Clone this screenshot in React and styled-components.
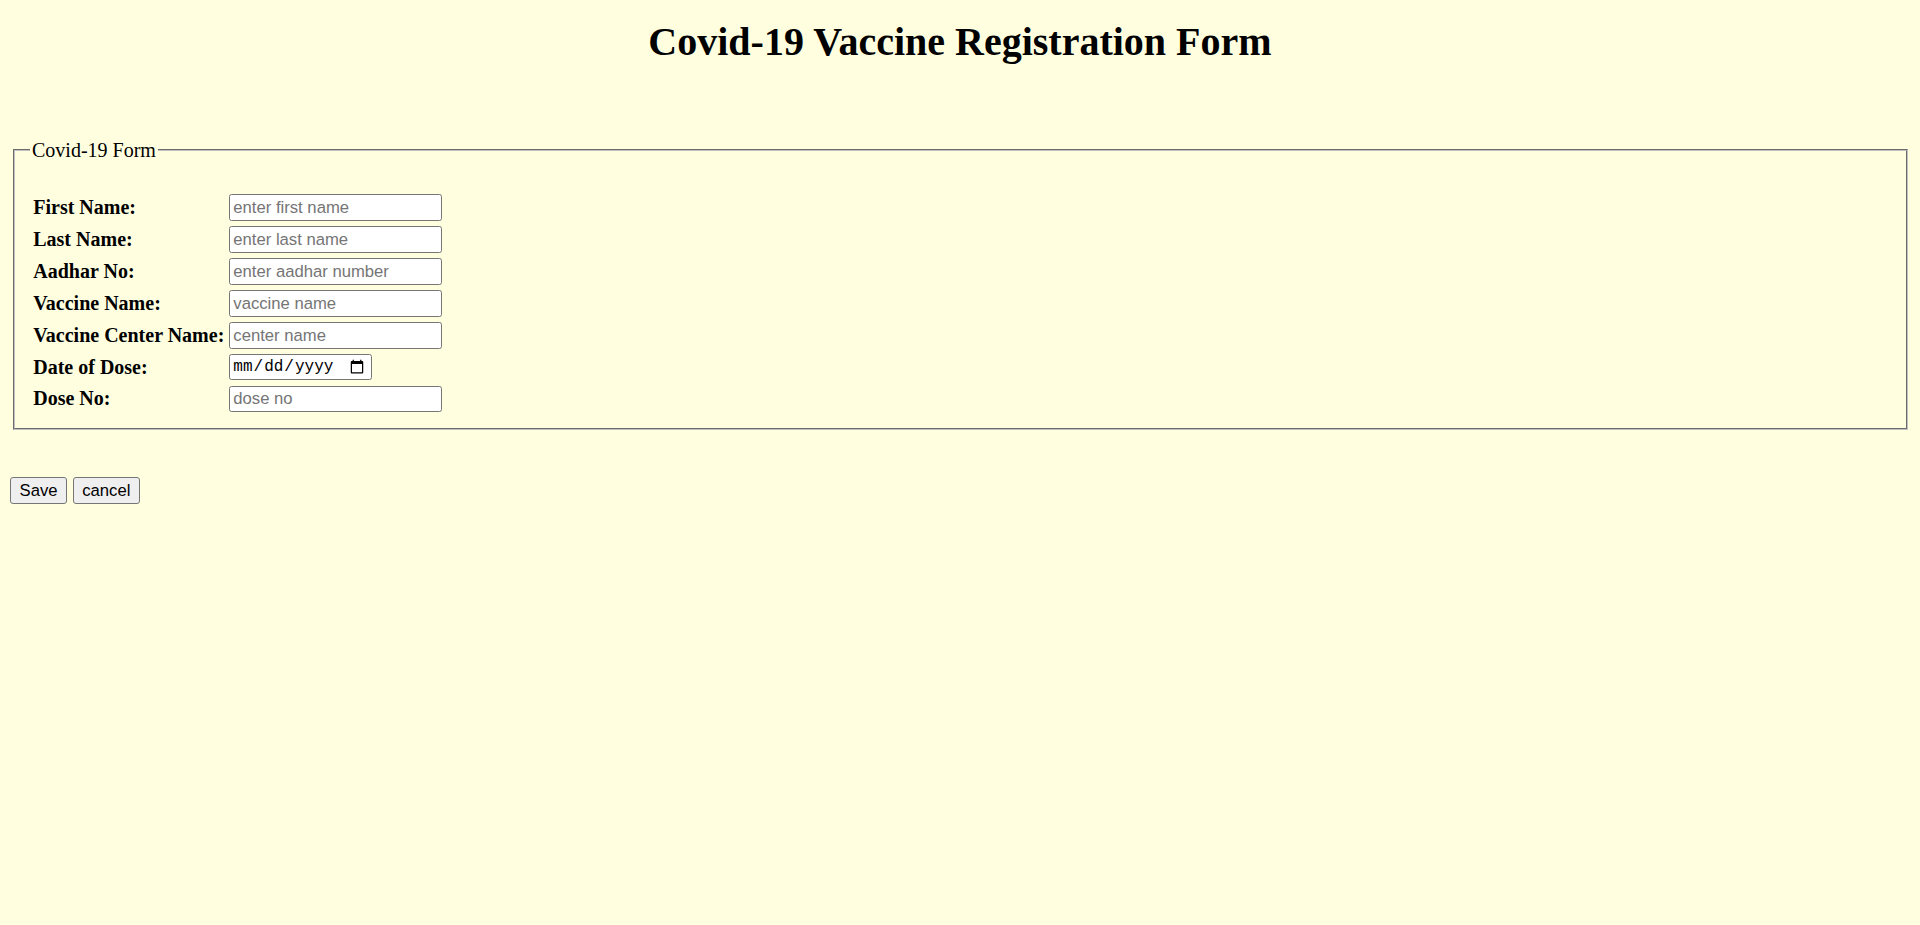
import React from 'react';
import styled, { createGlobalStyle } from 'styled-components';

const GlobalStyle = createGlobalStyle`
  html, body {
    margin: 0;
    padding: 0;
    background: #ffffe0;
  }
  body {
    font-family: "Liberation Serif", "Times New Roman", serif;
    font-size: 20px;
    color: #000;
  }
`;

const Page = styled.div`
  padding: 10px;
`;

const Title = styled.h1`
  margin: 8.5px 0 74px;
  font-size: 40px;
  font-weight: 700;
  line-height: 46px;
  text-align: center;
`;

const FieldSet = styled.fieldset`
  margin: 0 2.5px;
  padding: 7px 15px 16.25px;
  border: 2px groove rgb(192, 192, 192);
  min-width: 0;
`;

const Legend = styled.legend`
  padding: 0 2.5px;
  font-size: 20px;
  line-height: 23px;
`;

const Fields = styled.div`
  display: grid;
  grid-template-columns: max-content max-content;
  column-gap: 5px;
  row-gap: 5.33px;
  margin-top: 25.8px;
  padding-left: 3.75px;
`;

const Label = styled.label`
  align-self: center;
  font-weight: 700;
  font-size: 20px;
  line-height: 23px;
`;

const TextInput = styled.input`
  box-sizing: border-box;
  width: 212.5px;
  height: 26.67px;
  margin: 0;
  padding: 1px 3px;
  border: 1px solid #767676;
  border-radius: 2.5px;
  background: #fff;
  font-family: "Liberation Sans", Arial, sans-serif;
  font-size: 16.67px;
  color: #000;

  &::placeholder {
    color: #757575;
  }
`;

const DateInput = styled(TextInput)`
  width: 143px;
  height: 26px;
  padding: 0 4px 0 2px;
  font-family: "Liberation Mono", "DejaVu Sans Mono", monospace;
  font-size: 16px;
`;

const Actions = styled.div`
  display: flex;
  gap: 5.5px;
  margin-top: 47px;
`;

const Button = styled.button`
  box-sizing: border-box;
  height: 26.5px;
  margin: 0;
  padding: 0 8.6px;
  border: 1px solid #767676;
  border-radius: 3px;
  background: #efefef;
  font-family: "Liberation Sans", Arial, sans-serif;
  font-size: 16.67px;
  color: #000;
`;

const fields = [
  { id: 'fname', label: 'First Name:', placeholder: 'enter first name' },
  { id: 'lname', label: 'Last Name:', placeholder: 'enter last name' },
  { id: 'aadhar', label: 'Aadhar No:', placeholder: 'enter aadhar number' },
  { id: 'vname', label: 'Vaccine Name:', placeholder: 'vaccine name' },
  { id: 'center', label: 'Vaccine Center Name:', placeholder: 'center name' },
  { id: 'date', label: 'Date of Dose:', type: 'date' },
  { id: 'dose', label: 'Dose No:', placeholder: 'dose no' },
];

const App = () => {
  return (
    <Page>
      <GlobalStyle />
      <Title>Covid-19 Vaccine Registration Form</Title>
      <FieldSet>
        <Legend>Covid-19 Form</Legend>
        <Fields>
          {fields.map((f) => (
            <React.Fragment key={f.id}>
              <Label htmlFor={f.id}>{f.label}</Label>
              {f.type === 'date' ? (
                <DateInput id={f.id} type="date" />
              ) : (
                <TextInput id={f.id} type="text" placeholder={f.placeholder} />
              )}
            </React.Fragment>
          ))}
        </Fields>
      </FieldSet>
      <Actions>
        <Button type="button">Save</Button>
        <Button type="button">cancel</Button>
      </Actions>
    </Page>
  );
};

export default App;
